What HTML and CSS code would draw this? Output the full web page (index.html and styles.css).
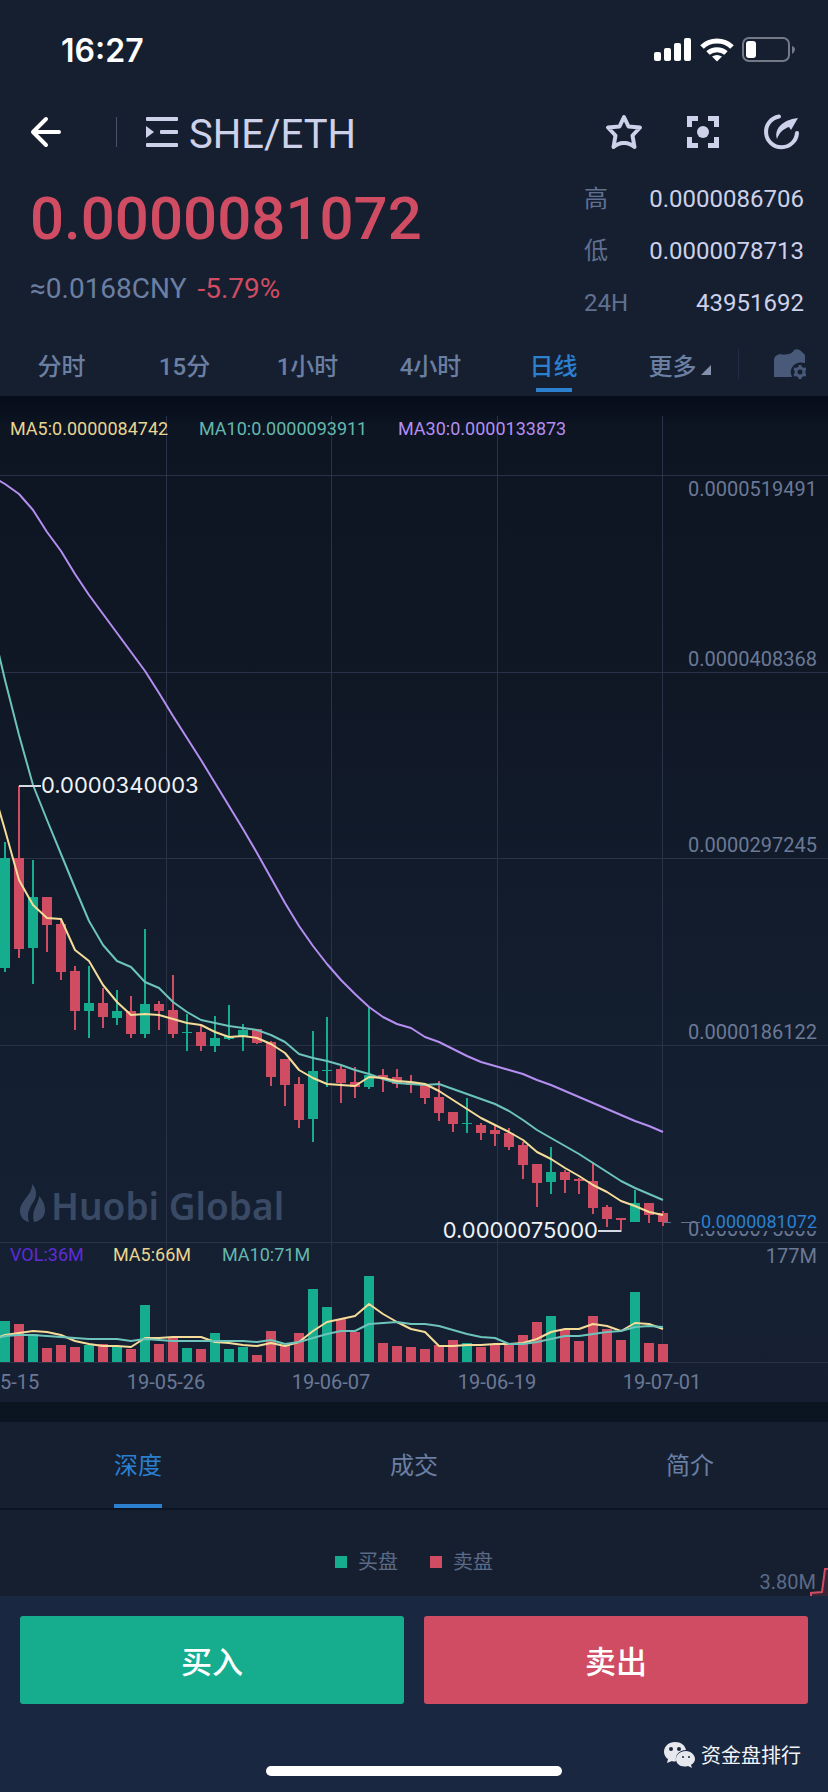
FILE: index.html
```html
<!DOCTYPE html>
<html lang="zh-CN">
<head>
    <meta charset="UTF-8">
    <meta name="viewport" content="width=device-width, initial-scale=1.0">
    <title>SHE/ETH</title>

    <link rel="stylesheet" href="styles.css">
</head>
<body>

    <!-- Status bar -->
    <div class="status-bar">
        <span class="time">16:27</span>
        <div class="status-icons">
            <svg width="38" height="24" viewBox="0 0 38 24" fill="#fff">
                <rect x="0" y="14" width="7" height="9" rx="2"/>
                <rect x="10" y="10" width="7" height="13" rx="2"/>
                <rect x="20" y="5" width="7" height="18" rx="2"/>
                <rect x="30" y="0" width="7" height="23" rx="2"/>
            </svg>
            <svg width="34" height="24" viewBox="0 0 34 24" fill="none" stroke="#fff" stroke-width="5">
                <path d="M2 9C10 1 24 1 32 9"/>
                <path d="M8 15C13 10.500 21 10.500 26 15"/>
                <path d="M17 23.500L12 18.500Q17 15.500 22 18.500Z" fill="#fff" stroke="none"/>
            </svg>
            <svg width="54" height="26" viewBox="0 0 54 26">
                <rect x="1" y="1" width="46" height="23" rx="6" fill="none" stroke="#737985" stroke-width="2"/>
                <rect x="4" y="4" width="10" height="17" rx="3" fill="#fff"/>
                <path d="M50 9Q53 10 53 12.500T50 17Z" fill="#737985"/>
            </svg>
        </div>
    </div>

    <!-- Title row -->
    <header class="nav">
        <button class="icon-btn back" aria-label="返回">
            <svg width="32" height="32" viewBox="0 0 32 32" fill="none" stroke="#fff" stroke-width="4" stroke-linecap="round" stroke-linejoin="round">
                <path d="M29 16H3M16 3L3 16L16 29"/>
            </svg>
        </button>
        <span class="nav-divider"></span>
        <button class="icon-btn" aria-label="市场列表">
            <svg width="32" height="30" viewBox="0 0 32 30" fill="#cdd1ea">
                <rect x="0" y="0" width="32" height="4" rx="1"/>
                <rect x="14" y="13" width="18" height="4" rx="1"/>
                <rect x="0" y="26" width="32" height="4" rx="1"/>
                <path d="M0 9L8 15L0 21Z"/>
            </svg>
        </button>
        <h1>SHE/ETH</h1>
        <div class="nav-actions">
            <button class="icon-btn" aria-label="收藏">
                <svg width="38" height="38" viewBox="0 0 38 38" fill="none" stroke="#cdd1ea" stroke-width="4" stroke-linejoin="round">
                    <path d="M19 4L23.500 13.500L35 14.500L27.500 22.500L29.500 34Q24 29.500 19 30Q14 29.500 8.500 34L10.500 22.500L3 14.500L14.500 13.500Z"/>
                </svg>
            </button>
            <button class="icon-btn" aria-label="全屏">
                <svg width="32" height="32" viewBox="0 0 32 32" fill="none" stroke="#cdd1ea" stroke-width="5">
                    <path d="M2.500 11V2.500H11M21 2.500H29.500V11M29.500 21V29.500H21M11 29.500H2.500V21"/>
                    <circle cx="16" cy="16" r="6" fill="#cdd1ea" stroke="none"/>
                </svg>
            </button>
            <button class="icon-btn" aria-label="分享">
                <svg width="38" height="38" viewBox="0 0 38 38">
                    <path d="M16 3.500A15.500 15.500 0 1 0 34 20" fill="none" stroke="#cdd1ea" stroke-width="4" stroke-linecap="round"/>
                    <path d="M14 26C11 17 18 7 35 5L28 17L26 14C20 16 16 20 14 26Z" fill="#cdd1ea"/>
                </svg>
            </button>
        </div>
    </header>

    <!-- Quote -->
    <section class="quote">
        <div class="quote-main">
            <div class="price">0.0000081072</div>
            <div class="sub-price">≈0.0168CNY <span class="change">-5.79%</span></div>
        </div>
        <dl class="stats">
            <div><dt>高</dt><dd>0.0000086706</dd></div>
            <div><dt>低</dt><dd>0.0000078713</dd></div>
            <div><dt>24H</dt><dd>43951692</dd></div>
        </dl>
    </section>

    <!-- Periods -->
    <nav class="periods">
        <div class="period-list">
            <button>分时</button>
            <button>15分</button>
            <button>1小时</button>
            <button>4小时</button>
            <button class="active">日线</button>
            <button class="more">更多</button>
        </div>
        <button class="settings" aria-label="指标设置">
            <svg width="32" height="30" viewBox="0 0 32 30">
                <path d="M0 28V10Q1 6 6 5Q11 6 14 5Q18 5 20 1Q24 -1 27 2L31 6V14Q23 12 19 17Q15 22 18 28Z" fill="#48597a"/>
                <circle cx="26" cy="23" r="4" fill="none" stroke="#48597a" stroke-width="3"/>
                <path d="M26 16V19M26 27V30M20 19.500L23 21M29 25L32 26.500M20 26.500L23 25M29 21L32 19.500" stroke="#48597a" stroke-width="3"/>
            </svg>
        </button>
    </nav>

    <!-- Candles and volume -->
    <svg class="chart" id="chart" viewBox="0 396 828 1006">
        <g class="grid">
            <path d="M0 475.500H828M0 672.500H828M0 858.500H828M0 1045.500H828M0 1242.500H828M0 1362.500H828"/>
            <path d="M166.500 416V1362M331.500 416V1362M497.500 416V1362M662.500 416V1362"/>
        </g>

        <g class="watermark">
            <path d="M32 1184C33 1194 20 1201 20 1211C20 1217 24 1221 29 1222C26 1213 30 1207 34 1201C37 1196 37 1189 32 1184Z"/>
            <path d="M39 1196C39 1204 31 1209 34 1222C41 1221 45 1216 45 1210C45 1204 42 1199 39 1196Z"/>
            <text x="51" y="1220">Huobi Global</text>
        </g>

        <g id="candles"></g>
        <g id="lines"></g>

        <g class="legend">
            <text class="ma5" x="10" y="435">MA5:0.0000084742</text>
            <text class="ma10" x="199" y="435">MA10:0.0000093911</text>
            <text class="ma30" x="398" y="435">MA30:0.0000133873</text>
            <text class="vol" x="10" y="1261">VOL:36M</text>
            <text class="ma5" x="113" y="1261">MA5:66M</text>
            <text class="ma10" x="222" y="1261">MA10:71M</text>
        </g>

        <g class="axis price-axis">
            <text x="817" y="496">0.0000519491</text>
            <text x="817" y="666">0.0000408368</text>
            <text x="817" y="852">0.0000297245</text>
            <text x="817" y="1039">0.0000186122</text>
            <text x="817" y="1236">0.0000075000</text>
            <text x="817" y="1263">177M</text>
        </g>
        <g class="axis date-axis">
            <text x="0" y="1389">19-05-15</text>
            <text x="166" y="1389">19-05-26</text>
            <text x="331" y="1389">19-06-07</text>
            <text x="497" y="1389">19-06-19</text>
            <text x="662" y="1389">19-07-01</text>
        </g>

        <g class="current">
            <path d="M663 1222.500H671M681 1222.500H700"/>
            <rect x="700" y="1212" width="118" height="19"/>
            <text x="817" y="1228">0.0000081072</text>
        </g>
        <g class="extremes">
            <path d="M19 786H41M598 1231H621"/>
            <text x="41" y="793">0.0000340003</text>
            <text class="low" x="598" y="1238">0.0000075000</text>
        </g>
    </svg>

    <!-- Depth -->
    <nav class="tabs">
        <button class="active">深度</button>
        <button>成交</button>
        <button>简介</button>
    </nav>
    <section class="depth">
        <div class="depth-legend">
            <span class="bid">买盘</span>
            <span class="ask">卖盘</span>
        </div>
        <span class="depth-max">3.80M</span>
        <svg class="depth-line" width="18" height="28" viewBox="0 0 18 28">
            <path d="M1 28V25L12 24L15 1H19V28Z" fill="#3a2438"/>
            <path d="M1 28V25L12 24L15 1H19" fill="none" stroke="#d04c62" stroke-width="2"/>
        </svg>
    </section>

    <!-- Actions -->
    <footer class="footer">
        <div class="actions">
            <button class="buy">买入</button>
            <button class="sell">卖出</button>
        </div>
        <div class="account">
            <svg width="32" height="28" viewBox="0 0 32 28">
                <path d="M11 0C5 0 0 4 0 10C0 13 2 16 4 17L3 21L8 19Q10 20 12 19C11 12 16 8 22 8C21 3 17 0 11 0Z" fill="#e6e8ee"/>
                <path d="M22 9C16 9 12 13 12 17C12 22 17 26 24 24L28 26L27 23C30 21 31 19 31 17C31 13 27 9 22 9Z" fill="#e6e8ee"/>
                <g fill="#192740"><circle cx="7" cy="7" r="2"/><circle cx="15" cy="7" r="2"/><circle cx="19" cy="15" r="1"/><circle cx="25" cy="15" r="1"/></g>
            </svg>
            <span>资金盘排行</span>
        </div>
        <div class="home-indicator"></div>
    </footer>

    <script>
        const SVG_NS = 'http://www.w3.org/2000/svg';
        const STEP = 14;
        const FIRST_X = 5;
        const VOLUME_BASE = 1362;

        // [up/down, high, body top, body bottom, low, volume top]
        const candles = [
            ['up', 842, 858, 968, 972, 1321],
            ['down', 786, 858, 949, 958, 1324],
            ['up', 860, 897, 948, 984, 1334],
            ['down', 897, 897, 925, 952, 1348],
            ['down', 918, 924, 972, 980, 1345],
            ['down', 966, 971, 1011, 1030, 1347],
            ['up', 966, 1003, 1011, 1038, 1345],
            ['down', 988, 1003, 1017, 1028, 1344],
            ['up', 990, 1011, 1018, 1025, 1347],
            ['down', 996, 1011, 1034, 1038, 1349],
            ['up', 929, 1004, 1034, 1038, 1305],
            ['down', 1001, 1004, 1011, 1030, 1344],
            ['down', 975, 1010, 1034, 1038, 1338],
            ['up', 1014, 1032, 1033, 1051, 1348],
            ['down', 1025, 1032, 1046, 1051, 1349],
            ['up', 1016, 1038, 1046, 1052, 1333],
            ['up', 1005, 1036, 1039, 1040, 1349],
            ['up', 1024, 1030, 1037, 1051, 1347],
            ['down', 1029, 1029, 1043, 1044, 1355],
            ['down', 1041, 1042, 1077, 1086, 1331],
            ['down', 1059, 1059, 1085, 1106, 1345],
            ['down', 1077, 1084, 1120, 1128, 1333],
            ['up', 1031, 1071, 1119, 1142, 1289],
            ['up', 1017, 1070, 1071, 1087, 1307],
            ['down', 1066, 1069, 1083, 1103, 1319],
            ['down', 1067, 1082, 1087, 1098, 1332],
            ['up', 1007, 1075, 1087, 1089, 1276],
            ['down', 1069, 1075, 1078, 1092, 1343],
            ['down', 1069, 1077, 1084, 1088, 1346],
            ['down', 1075, 1082, 1085, 1093, 1347],
            ['down', 1083, 1084, 1098, 1104, 1349],
            ['down', 1081, 1097, 1113, 1121, 1345],
            ['down', 1112, 1112, 1124, 1132, 1340],
            ['up', 1098, 1123, 1124, 1133, 1343],
            ['down', 1123, 1125, 1133, 1140, 1347],
            ['down', 1126, 1130, 1134, 1146, 1344],
            ['down', 1128, 1133, 1147, 1150, 1345],
            ['down', 1142, 1145, 1165, 1179, 1335],
            ['down', 1164, 1164, 1183, 1207, 1322],
            ['up', 1147, 1172, 1182, 1194, 1316],
            ['down', 1170, 1172, 1180, 1193, 1329],
            ['down', 1178, 1179, 1181, 1194, 1341],
            ['down', 1162, 1181, 1208, 1214, 1316],
            ['down', 1205, 1207, 1219, 1227, 1329],
            ['down', 1218, 1218, 1220, 1232, 1340],
            ['up', 1190, 1203, 1222, 1222, 1292],
            ['down', 1203, 1203, 1215, 1223, 1343],
            ['down', 1211, 1213, 1222, 1226, 1344]
        ];

        // each line starts one step left of the first candle
        const lines = {
            ma30: [476, 484, 494, 510, 532, 551, 574, 595, 614, 633, 652, 671, 693, 716, 738, 760, 783,
                806, 829, 853, 878, 903, 926, 946, 964, 980, 994, 1007, 1017, 1024, 1028, 1037, 1042,
                1049, 1056, 1062, 1066, 1070, 1074, 1080, 1085, 1091, 1097, 1103, 1109, 1115, 1121, 1126, 1132],
            ma10: [621, 680, 735, 785, 820, 854, 888, 921, 945, 961, 967, 982, 988, 1002, 1012, 1020, 1023,
                1026, 1028, 1030, 1035, 1042, 1054, 1058, 1061, 1065, 1070, 1074, 1079, 1083, 1084, 1085, 1084,
                1089, 1094, 1099, 1104, 1111, 1120, 1130, 1138, 1146, 1154, 1163, 1172, 1181, 1188, 1194, 1200],
            ma5: [782, 830, 880, 905, 918, 919, 950, 961, 985, 1002, 1015, 1014, 1015, 1019, 1023, 1025, 1032,
                1037, 1036, 1038, 1044, 1053, 1070, 1078, 1084, 1085, 1086, 1077, 1078, 1081, 1082, 1084, 1091,
                1100, 1109, 1118, 1125, 1132, 1140, 1152, 1159, 1168, 1176, 1185, 1192, 1201, 1206, 1212, 1215],
            'ma5 volume': [1340, 1335, 1333, 1331, 1332, 1335, 1341, 1344, 1346, 1346, 1347, 1338, 1338, 1337, 1337, 1337, 1342,
                1343, 1345, 1346, 1343, 1346, 1342, 1331, 1322, 1319, 1316, 1304, 1314, 1322, 1329, 1332, 1346,
                1346, 1345, 1345, 1344, 1344, 1343, 1339, 1332, 1329, 1329, 1324, 1326, 1331, 1323, 1324, 1329],
            'ma10 volume': [1340, 1336, 1335, 1335, 1336, 1337, 1338, 1339, 1339, 1339, 1341, 1339, 1340, 1341, 1341, 1341, 1341,
                1341, 1341, 1342, 1340, 1344, 1342, 1338, 1334, 1331, 1331, 1324, 1323, 1322, 1324, 1324, 1326,
                1330, 1334, 1337, 1338, 1344, 1344, 1342, 1339, 1336, 1336, 1334, 1332, 1331, 1327, 1326, 1327]
        };

        function addShape(parent, name, attrs) {
            const el = document.createElementNS(SVG_NS, name);
            for (const key in attrs) {
                el.setAttribute(key, attrs[key]);
            }
            parent.appendChild(el);
        }

        const candleGroup = document.getElementById('candles');
        candles.forEach(([dir, high, top, bottom, low, volume], i) => {
            const x = FIRST_X + i * STEP;
            addShape(candleGroup, 'rect', { class: dir, x: x - 1, y: high, width: 2, height: low - high });
            addShape(candleGroup, 'rect', { class: dir, x: x - 5, y: top, width: 10, height: bottom - top });
            addShape(candleGroup, 'rect', { class: dir, x: x - 5, y: volume, width: 10, height: VOLUME_BASE - volume });
        });

        const lineGroup = document.getElementById('lines');
        for (const name in lines) {
            const points = lines[name].map((y, i) => `${FIRST_X + (i - 1) * STEP},${y}`).join(' ');
            addShape(lineGroup, 'polyline', { class: name, points: points });
        }
    </script>

</body>
</html>
```
FILE: styles.css
```css
* {
    box-sizing: border-box;
}

body {
    margin: 0;
    min-height: 100vh;
    display: flex;
    flex-direction: column;
    background-color: #161f30;
    color: #cdd1ea;
    font-family: Roboto, "Noto Sans CJK SC", sans-serif;
}

button {
    padding: 0;
    border: none;
    background: none;
    color: inherit;
    font: inherit;
    cursor: pointer;
}

svg {
    display: block;
}

/* Status bar */
.status-bar {
    height: 98px;
    padding: 2px 32px 0 61px;
    display: flex;
    align-items: center;
    justify-content: space-between;
    color: #fff;
}

.time {
    font-family: Inter, sans-serif;
    font-size: 32px;
    font-weight: 600;
}

.status-icons {
    display: flex;
    align-items: center;
    gap: 8px;
}

/* Title row */
.nav {
    height: 68px;
    padding: 0 27px 0 30px;
    display: flex;
    align-items: center;
}

.nav-divider {
    width: 1px;
    height: 30px;
    margin: 0 29px 0 54px;
    background-color: #48536b;
}

.nav h1 {
    margin: 6px 0 0 11px;
    font-size: 40px;
    font-weight: 400;
    line-height: 48px;
}

.nav-actions {
    margin-left: auto;
    display: flex;
    align-items: center;
    gap: 44px;
}

/* Quote */
.quote {
    padding: 7px 24px 3px 30px;
    display: flex;
    justify-content: space-between;
}

.quote-main {
    padding-top: 10px;
}

.price {
    margin-bottom: 16px;
    color: #d04c62;
    font-size: 60px;
    font-weight: 500;
    line-height: 72px;
}

.sub-price {
    color: #6b7fa3;
    font-size: 28px;
    line-height: 36px;
}

.change {
    margin-left: 4px;
    color: #d04c62;
}

.stats {
    width: 220px;
    margin: 0;
    font-size: 24px;
    line-height: 52px;
}

.stats div {
    display: flex;
    justify-content: space-between;
}

.stats dt {
    color: #5f7090;
}

.stats dd {
    margin: 0;
}

/* Periods */
.periods {
    height: 64px;
    display: flex;
    align-items: center;
    color: #6b7fa3;
    font-size: 24px;
    font-weight: 500;
}

.period-list {
    flex: 1;
    height: 64px;
    display: grid;
    grid-template-columns: repeat(6, 1fr);
}

.period-list button {
    position: relative;
}

.period-list .more {
    padding-left: 6px;
}

.period-list .active,
.tabs .active {
    color: #2b80d0;
}

.period-list .active::after {
    content: "";
    position: absolute;
    left: 50%;
    bottom: 4px;
    width: 36px;
    height: 4px;
    margin-left: -18px;
    background-color: #2b80d0;
}

.more::after {
    content: "";
    display: inline-block;
    margin-left: 4px;
    border-left: 10px solid transparent;
    border-bottom: 10px solid #8391ad;
}

.settings {
    width: 90px;
    height: 30px;
    padding-left: 35px;
    border-left: 1px solid #222d44;
}

/* Chart */
.chart {
    width: 100%;
    height: auto;
    background: linear-gradient(#060c18, #0d1422 3%, #101826 30%, #142032 75%, #161f32);
}

.grid path {
    fill: none;
    stroke: #293246;
}

.watermark {
    fill: #3a4a64;
    font-family: "Noto Sans", sans-serif;
    font-size: 37px;
    font-weight: 600;
}

.up {
    fill: #16ad8f;
}

.down {
    fill: #d04c62;
}

polyline {
    fill: none;
    stroke-width: 2;
    stroke-linejoin: round;
}

polyline.ma5 {
    stroke: #f5dc98;
}

polyline.ma10 {
    stroke: #6cc4ba;
}

polyline.ma30 {
    stroke: #b48ef0;
}

.legend {
    font-size: 18px;
}

.legend .ma5 {
    fill: #e8d590;
}

.legend .ma10 {
    fill: #64b8ad;
}

.legend .ma30 {
    fill: #b48ef0;
}

.legend .vol {
    fill: #5f2bd8;
}

.axis {
    fill: #6b7995;
    font-size: 20px;
}

.price-axis,
.current {
    text-anchor: end;
}

.date-axis {
    text-anchor: middle;
}

.current {
    font-size: 18px;
}

.current path {
    stroke: #64728f;
}

.current rect {
    fill: #152033;
}

.current text {
    fill: #2b80d0;
}

.extremes {
    fill: #f0f2f6;
    font-family: Inter, sans-serif;
    font-size: 22px;
}

.extremes path {
    stroke: #d5d9e2;
    stroke-width: 2;
}

.extremes .low {
    text-anchor: end;
}

/* Depth */
.tabs {
    display: flex;
    border-top: 20px solid #0b1522;
    border-bottom: 2px solid #0b1422;
    color: #6b7fa3;
    font-size: 24px;
}

.tabs button {
    position: relative;
    flex: 1;
    height: 86px;
    padding-bottom: 4px;
}

.tabs .active::after {
    content: "";
    position: absolute;
    left: 50%;
    bottom: 0;
    width: 48px;
    height: 4px;
    margin-left: -24px;
    background-color: #2b80d0;
}

.depth {
    position: relative;
    flex: 1;
    min-height: 86px;
    padding-top: 37px;
    color: #5b6a87;
    font-size: 20px;
}

.depth-legend {
    display: flex;
    justify-content: center;
    gap: 32px;
    line-height: 30px;
}

.depth-legend span {
    display: flex;
    align-items: center;
    gap: 11px;
}

.depth-legend span::before {
    content: "";
    width: 12px;
    height: 12px;
    background-color: #16ad8f;
}

.depth-legend .ask::before {
    background-color: #d04c62;
}

.depth-max {
    position: absolute;
    right: 12px;
    bottom: 3px;
    line-height: 22px;
}

.depth-line {
    position: absolute;
    right: 0;
    bottom: 0;
}

/* Actions */
.footer {
    padding: 20px 20px 16px;
    background-color: #192740;
}

.actions {
    display: flex;
    gap: 20px;
}

.actions button {
    flex: 1;
    height: 88px;
    padding-bottom: 2px;
    border-radius: 3px;
    color: #fff;
    font-size: 31px;
    font-weight: 500;
}

.buy {
    background-color: #16ad8f;
}

.sell {
    background-color: #d04c62;
}

.account {
    margin-top: 38px;
    margin-bottom: -4px;
    padding-right: 7px;
    display: flex;
    align-items: center;
    justify-content: flex-end;
    gap: 5px;
    color: #f2f4f8;
    font-size: 20px;
    line-height: 28px;
}

.home-indicator {
    width: 296px;
    height: 10px;
    margin: 0 auto;
    border-radius: 5px;
    background-color: #fff;
}
```
